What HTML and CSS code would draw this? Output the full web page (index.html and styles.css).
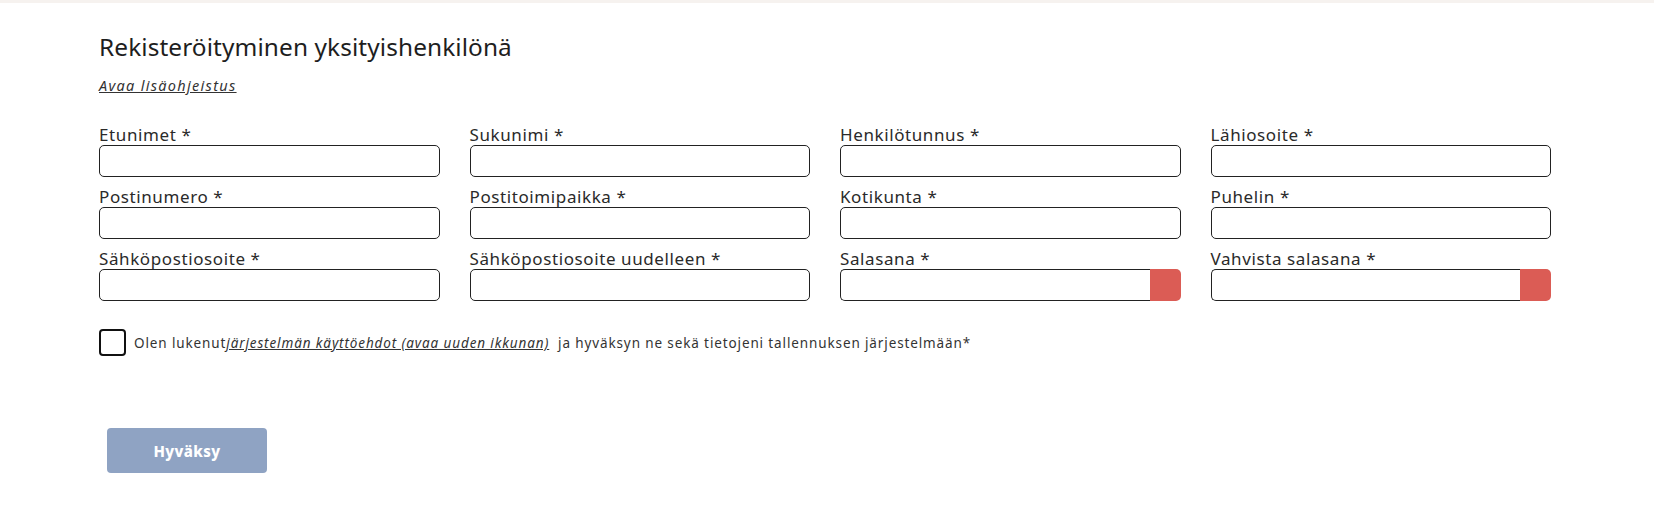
FILE: index.html
```html
<!DOCTYPE html>
<html lang="fi">
<head>
<meta charset="utf-8">
<title>Rekisteröityminen yksityishenkilönä</title>
<link rel="stylesheet" href="styles.css">
</head>
<body>
<div class="topbar"></div>
<main class="page">
  <h1 class="title">Rekisteröityminen yksityishenkilönä</h1>
  <a class="help-link" href="#">Avaa lisäohjeistus</a>
  <form class="form">
    <div class="grid">
      <div class="field"><label>Etunimet *</label><input class="input" type="text"></div>
      <div class="field"><label>Sukunimi *</label><input class="input" type="text"></div>
      <div class="field"><label>Henkilötunnus *</label><input class="input" type="text"></div>
      <div class="field"><label>Lähiosoite *</label><input class="input" type="text"></div>
      <div class="field"><label>Postinumero *</label><input class="input" type="text"></div>
      <div class="field"><label>Postitoimipaikka *</label><input class="input" type="text"></div>
      <div class="field"><label>Kotikunta *</label><input class="input" type="text"></div>
      <div class="field"><label>Puhelin *</label><input class="input" type="text"></div>
      <div class="field"><label>Sähköpostiosoite *</label><input class="input" type="text"></div>
      <div class="field"><label>Sähköpostiosoite uudelleen *</label><input class="input" type="text"></div>
      <div class="field"><label>Salasana *</label><div class="pw"><input class="input pw-input" type="password"><span class="pw-flag"></span></div></div>
      <div class="field"><label>Vahvista salasana *</label><div class="pw"><input class="input pw-input" type="password"><span class="pw-flag"></span></div></div>
    </div>
    <div class="terms">
      <span class="checkbox"></span>
      <span class="terms-text">Olen lukenut<a href="#" class="terms-link">järjestelmän käyttöehdot (avaa uuden ikkunan)</a>&nbsp; ja hyväksyn ne sekä tietojeni tallennuksen järjestelmään*</span>
    </div>
    <button type="button" class="submit">Hyväksy</button>
  </form>
</main>
</body>
</html>
```
FILE: styles.css
```css
* { box-sizing: border-box; }
html, body { margin: 0; padding: 0; background: #fff; }
body { font-family: "Noto Sans", "Open Sans", sans-serif; color: #222; }

.topbar { height: 3px; background: #f6f2ef; }

.page { padding: 0 103px 0 99px; }

.title {
  margin: 0;
  padding-top: 26px;
  font-weight: 400;
  font-size: 24.4px;
  line-height: 36px;
  color: #1e1e1e;
  letter-spacing: 0.1px;
}

.help-link {
  display: inline-block;
  margin-top: 11px;
  font-size: 14.5px;
  line-height: 18px;
  font-style: italic;
  letter-spacing: 1.3px;
  color: #333;
  text-decoration: underline;
}

.form { margin-top: 29px; }

.grid {
  display: grid;
  grid-template-columns: repeat(4, 1fr);
  column-gap: 30px;
  row-gap: 10px;
}

.field { display: flex; flex-direction: column; }
.field label {
  height: 20px;
  font-size: 17px;
  line-height: 20px;
  letter-spacing: 0.6px;
  color: #2a2a2a;
}

.input {
  display: block;
  width: 100%;
  height: 32px;
  margin: 0;
  border: 1px solid #222;
  border-radius: 5px;
  background: #fff;
  font: inherit;
  padding: 0 8px;
}

.pw { display: flex; height: 32px; }
.pw-input { flex: 1; border-radius: 5px 0 0 5px; border-right: none; }
.pw-flag {
  width: 31px;
  height: 32px;
  background: #db5c55;
  border-radius: 0 5px 5px 0;
}

.terms {
  display: flex;
  align-items: center;
  gap: 8px;
  margin-top: 28px;
}
.checkbox {
  width: 27px;
  height: 27px;
  border: 2px solid #111;
  border-radius: 4px;
  flex: none;
}
.terms-text {
  font-size: 13.5px;
  color: #333;
  letter-spacing: 0.88px;
}
.terms-link {
  color: #333;
  font-style: italic;
  text-decoration: underline;
}

.submit {
  display: block;
  margin: 72px 0 0 8px;
  width: 160px;
  height: 45px;
  border: none;
  border-radius: 4px;
  background: #8fa3c3;
  color: #fff;
  font-family: "Noto Sans", "Open Sans", sans-serif;
  font-weight: 800;
  font-size: 15px;
  letter-spacing: 0.4px;
}
```
